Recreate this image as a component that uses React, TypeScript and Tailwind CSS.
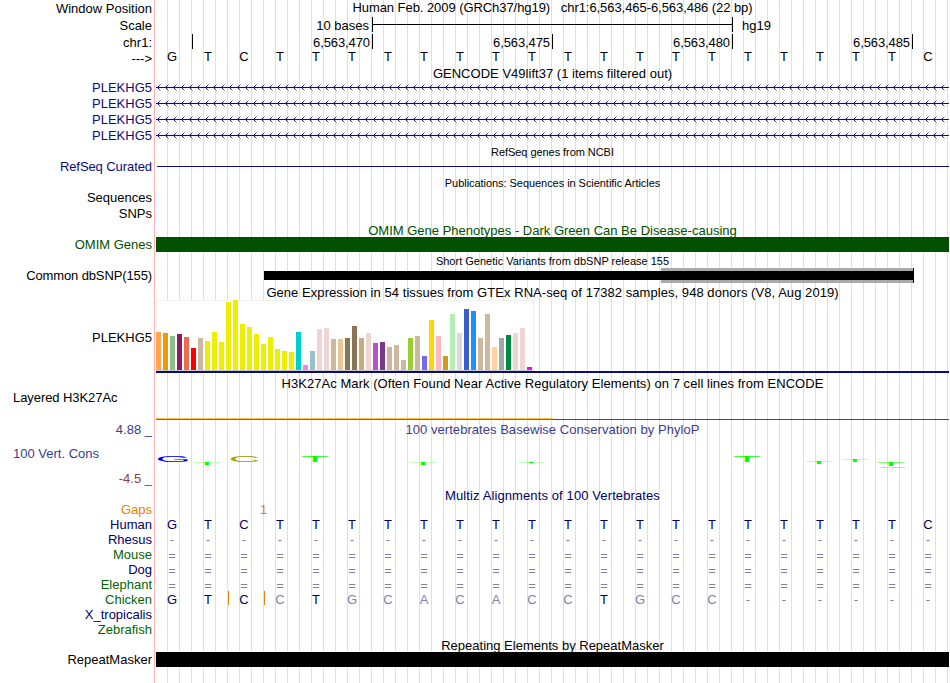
import type { ReactNode } from "react";

const navy = "text-[#0c0c78]";
const deepNavy = "text-[#000064]";
const green = "text-[#005000]";
const species = "text-[#006400]";

// Left side labels, top to bottom. h is the row height class
const labels = [
  { text: "Window Position", h: "h-[17px]", color: "text-black" },
  { text: "Scale", h: "h-[17px]", color: "text-black" },
  { text: "chr1:", h: "h-[17px]", color: "text-black" },
  { text: "--->", h: "h-[15px]", color: "text-black" },
  { text: "", h: "h-[13px]", color: "" },
  { text: "PLEKHG5", h: "h-4", color: navy },
  { text: "PLEKHG5", h: "h-4", color: navy },
  { text: "PLEKHG5", h: "h-4", color: navy },
  { text: "PLEKHG5", h: "h-4", color: navy },
  { text: "", h: "h-[15px]", color: "" },
  { text: "RefSeq Curated", h: "h-4", color: `${navy} tracking-[-0.08px]` },
  { text: "", h: "h-[15px]", color: "" },
  { text: "Sequences", h: "h-4", color: "text-black" },
  { text: "SNPs", h: "h-4", color: "text-black" },
  { text: "", h: "h-[15px]", color: "" },
  { text: "OMIM Genes", h: "h-4", color: green },
  { text: "", h: "h-[15px]", color: "" },
  { text: "Common dbSNP(155)", h: "h-4", color: "text-black tracking-[-0.12px]" },
  { text: "", h: "h-[46px]", color: "" },
  { text: "PLEKHG5", h: "h-4", color: "text-black" },
  { text: "", h: "h-11", color: "" },
  { text: "Layered H3K27Ac", h: "h-4", color: "text-black tracking-[-0.07px]", left: true },
  { text: "", h: "h-4", color: "" },
  { text: "4.88 _", h: "h-4", color: "text-[#3c3c8c]" },
  { text: "", h: "h-2", color: "" },
  { text: "100 Vert. Cons", h: "h-4", color: "text-[#3c3c8c]", left: true },
  { text: "", h: "h-[9px]", color: "" },
  { text: "-4.5 _", h: "h-4", color: "text-[#8c3c3c]" },
  { text: "", h: "h-4", color: "" },
  { text: "Gaps", h: "h-[15px]", color: "text-[#e68200]" },
  { text: "Human", h: "h-[15px]", color: deepNavy },
  { text: "Rhesus", h: "h-[15px]", color: deepNavy },
  { text: "Mouse", h: "h-[15px]", color: species },
  { text: "Dog", h: "h-[15px]", color: deepNavy },
  { text: "Elephant", h: "h-[15px]", color: species },
  { text: "Chicken", h: "h-[15px]", color: species },
  { text: "X_tropicalis", h: "h-[15px]", color: deepNavy },
  { text: "Zebrafish", h: "h-[15px]", color: species },
  { text: "", h: "h-[15px]", color: "" },
  { text: "RepeatMasker", h: "h-[15px]", color: "text-black" },
];

// GTEx bars: [height, color]
const expression: [number, string][] = [
  [38, "#ffa54f"], [37, "#ee9a00"], [34, "#8fbc8f"], [36, "#8b1c62"], [33, "#ee6a50"],
  [22, "#ff0000"], [32, "#cdb79e"], [29, "#eeee00"], [38, "#eeee00"], [28, "#eeee00"],
  [68, "#eeee00"], [70, "#eeee00"], [46, "#eeee00"], [43, "#eeee00"], [36, "#eeee00"],
  [26, "#eeee00"], [33, "#eeee00"], [21, "#eeee00"], [19, "#eeee00"], [18, "#eeee00"],
  [38, "#00cdcd"], [5, "#ee82ee"], [19, "#9ac0cd"], [41, "#eed5d2"], [42, "#eed5d2"],
  [31, "#cdb79e"], [31, "#eec591"], [32, "#8b7355"], [44, "#8b7355"], [32, "#cdaa7d"],
  [37, "#eed5d2"], [27, "#b452cd"], [28, "#7a378b"], [23, "#cdb79e"], [25, "#cdb79e"],
  [10, "#cdb79e"], [32, "#9acd32"], [34, "#cdb79e"], [14, "#7a67ee"], [50, "#ffd700"],
  [34, "#ffb6c1"], [14, "#cd9b1d"], [56, "#b4eeb4"], [37, "#d9d9d9"], [61, "#3a5fcd"],
  [59, "#1e90ff"], [32, "#cdb79e"], [56, "#cdb79e"], [23, "#ffd39b"], [32, "#a6a6a6"],
  [35, "#008b45"], [37, "#eed5d2"], [42, "#eed5d2"], [3, "#ff00ff"],
];

// Ink box of each base letter in font units (1/1000 em)
const ink = {
  G: { left: 50, width: 665, cap: 710 },
  C: { left: 50, width: 640, cap: 710 },
  T: { left: 21, width: 569, cap: 688 },
};

const conservation: { base: "G" | "C" | "T"; x: number; y: number; w: number; h: number; fill: string }[] = [
  { base: "G", x: 2, y: 18, w: 30, h: 6, fill: "#0000ff" },
  { base: "T", x: 38, y: 24, w: 26, h: 3, fill: "#00ff00" },
  { base: "C", x: 75, y: 18, w: 28, h: 6, fill: "#a0a000" },
  { base: "T", x: 146, y: 18, w: 26, h: 6, fill: "#00ff00" },
  { base: "T", x: 254, y: 24, w: 26, h: 3, fill: "#00ff00" },
  { base: "T", x: 362, y: 24, w: 26, h: 1, fill: "#00ff00" },
  { base: "T", x: 578, y: 18, w: 26, h: 6, fill: "#00ff00" },
  { base: "T", x: 650, y: 24, w: 26, h: 2, fill: "#00ff00" },
  { base: "T", x: 686, y: 21, w: 26, h: 3, fill: "#00ff00" },
  { base: "T", x: 722, y: 24, w: 26, h: 4, fill: "#00ff00" },
  { base: "C", x: 724, y: 28, w: 27, h: 1.6, fill: "#b4b450" },
];

function Title({ children, className }: { children: ReactNode; className: string }) {
  return (
    <div className={`flex shrink-0 justify-center items-center whitespace-pre ${className}`}>
      <span>{children}</span>
    </div>
  );
}

function Bases({ seq, className, faded = [] }: { seq: string; className: string; faded?: number[] }) {
  return (
    <div className={`flex items-center -ml-[2px] ${className}`}>
      {seq.split("").map((base, i) => (
        <span key={i} className={`w-9 shrink-0 text-center ${faded.includes(i) ? "text-[#8080b4]" : ""}`}>
          {base}
        </span>
      ))}
    </div>
  );
}

function Intron() {
  return (
    <svg className="w-[793px] h-4 block shrink-0" shapeRendering="crispEdges">
      <rect x="0" y="7" width="793" height="1" fill="#0c0c78" />
      {Array.from({ length: 99 }, (_, i) => (
        <g key={i} fill="#0c0c78">
          <rect x={i * 8 + 2} y="6" width="1" height="3" />
          <rect x={i * 8 + 3} y="5" width="1" height="1" opacity="0.8" />
          <rect x={i * 8 + 3} y="9" width="1" height="1" opacity="0.8" />
          <rect x={i * 8 + 4} y="4" width="1" height="1" opacity="0.3" />
          <rect x={i * 8 + 4} y="10" width="1" height="1" opacity="0.3" />
        </g>
      ))}
    </svg>
  );
}

function Tick({ label, width }: { label: string; width: string }) {
  return (
    <div className={`${width} h-[15px] shrink-0 flex justify-end items-center border-r border-black pr-[2px]`}>
      <span className="pt-[2px] tracking-[-0.1px]">{label}</span>
    </div>
  );
}

function Labels() {
  return (
    <div className="w-[154px] shrink-0 flex flex-col pr-[2px]">
      {labels.map((row, i) => (
        <div
          key={i}
          className={`${row.h} ${row.color} shrink-0 flex items-center whitespace-pre ${
            row.left ? "pl-[13px]" : "justify-end"
          }`}
        >
          {row.text}
        </div>
      ))}
    </div>
  );
}

function Tracks() {
  return (
    <div className="w-[793px] ml-px shrink-0 flex flex-col overflow-hidden bg-[repeating-linear-gradient(to_right,transparent_0_11px,#dcdcff_11px_12px)]">
      <Title className="h-4 pb-[2px] tracking-[-0.06px]">
        {"Human Feb. 2009 (GRCh37/hg19)   chr1:6,563,465-6,563,486 (22 bp)"}
      </Title>
      <div className="h-[18px] flex items-center">
        <span className="w-[213px] text-right">10 bases</span>
        <div className="w-[361px] h-[15px] ml-[3px] -mt-px flex items-center border-x border-black">
          <div className="w-full h-px bg-black" />
        </div>
        <span className="ml-[9px]">hg19</span>
      </div>
      <div className="h-4 flex">
        <Tick label="" width="w-[37px]" />
        <Tick label="6,563,470" width="w-[180px]" />
        <Tick label="6,563,475" width="w-[180px]" />
        <Tick label="6,563,480" width="w-[180px]" />
        <Tick label="6,563,485" width="w-[180px]" />
      </div>
      <Bases seq="GTCTTTTTTTTTTTTTTTTTTC" className="h-[15px] pb-[2px] text-black" />
      <Title className="h-4 tracking-[0.02px]">GENCODE V49lift37 (1 items filtered out)</Title>
      <div className="h-[63px] flex flex-col -mt-px">
        <Intron />
        <Intron />
        <Intron />
        <Intron />
      </div>
      <Title className="h-4 mt-px text-[11px] tracking-[-0.06px]">RefSeq genes from NCBI</Title>
      <div className="h-4 pt-[6px] pl-px">
        <div className="h-px bg-[#0c0c78]" />
      </div>
      <Title className="h-[15px] text-[11px] tracking-[-0.05px]">Publications: Sequences in Scientific Articles</Title>
      <div className="h-8" />
      <Title className={`h-[14px] ${green}`}>OMIM Gene Phenotypes - Dark Green Can Be Disease-causing</Title>
      <div className="h-[15px] bg-[#005000]" />
      <Title className="h-4 pt-[2px] text-[11px]">Short Genetic Variants from dbSNP release 155</Title>
      <div className="h-[15px] flex items-center pl-[108px]">
        <div className="w-[397px] h-[9px] bg-black" />
        <div className="w-[253px] h-[15px] flex items-center bg-[#a9a9a9] border-r border-black">
          <div className="w-full h-[9px] bg-black" />
        </div>
      </div>
      <Title className="h-[17px] pt-[2px] tracking-[0.055px]">
        Gene Expression in 54 tissues from GTEx RNA-seq of 17382 samples, 948 donors (V8, Aug 2019)
      </Title>
      <div className="h-[73px] flex flex-col">
        <div className="w-[378px] h-[71px] flex items-end gap-[2px] bg-white border-r border-b border-b-[#c8c8c8] border-r-[#f0f0f0] shadow-[inset_0_1px_#f0f0f0,inset_1px_0_#f0f0f0]">
          {expression.map(([height, color], i) => (
            <div key={i} className="w-[5px] shrink-0" style={{ height, backgroundColor: color }} />
          ))}
        </div>
        <div className="h-[2px] bg-[#0c0c78]" />
      </div>
      <Title className="h-[21px] tracking-[0.05px]">
        H3K27Ac Mark (Often Found Near Active Regulatory Elements) on 7 cell lines from ENCODE
      </Title>
      <div className="h-[26px] flex flex-col justify-end">
        <div className="w-[397px] h-px shrink-0 bg-[#ffbe50]" />
        <div className="flex h-px shrink-0">
          <div className="w-[397px] bg-[#8c6446]" />
          <div className="grow bg-[#464678]" />
        </div>
      </div>
      <Title className="h-[18px] tracking-[0.04px] text-[#3c3c8c]">100 vertebrates Basewise Conservation by PhyloP</Title>
      <svg className="w-[793px] h-[50px] block shrink-0">
        {conservation.map(({ base, x, y, w, h, fill }, i) => {
          const box = ink[base];
          return (
            <text
              key={i}
              fontSize="1000"
              fill={fill}
              transform={`translate(${x} ${y + h}) scale(${w / box.width} ${h / box.cap}) translate(${-box.left} 0)`}
            >
              {base}
            </text>
          );
        })}
      </svg>
      <Title className={`h-[14px] tracking-[0.11px] ${deepNavy}`}>Multiz Alignments of 100 Vertebrates</Title>
      <div className="h-[15px] flex items-center pl-[104px] text-[#e68200]">1</div>
      <Bases seq="GTCTTTTTTTTTTTTTTTTTTC" className={`h-[15px] ${deepNavy}`} />
      <Bases seq="----------------------" className="h-[15px] text-[#8080b4]" />
      <Bases seq="======================" className="h-[15px] pt-[2px] text-[#8080b4]" />
      <Bases seq="======================" className="h-[15px] pt-[2px] text-[#8080b4]" />
      <Bases seq="======================" className="h-[15px] pt-[2px] text-[#8080b4]" />
      <div className="relative">
        <Bases
          seq="GTCCTGCACACCTGCC------"
          className={`h-[15px] ${deepNavy}`}
          faded={[3, 5, 6, 7, 8, 9, 10, 11, 13, 14, 15, 16, 17, 18, 19, 20, 21]}
        />
        {/* insertions in the chicken sequence */}
        <div className="absolute -top-px left-[72px] w-px h-[14px] bg-[#e68200]" />
        <div className="absolute -top-px left-[108px] w-px h-[14px] bg-[#e68200]" />
      </div>
      <div className="h-[30px]" />
      <Title className="h-[15px] pt-[2px]">Repeating Elements by RepeatMasker</Title>
      <div className="h-[15px] bg-black" />
    </div>
  );
}

function App() {
  return (
    <div className="w-[950px] h-[683px] flex overflow-hidden bg-white text-[13px] leading-none text-black font-['Liberation_Sans',Arial,sans-serif]">
      <Labels />
      <div className="flex border-l border-[#ffb4b4]">
        <Tracks />
      </div>
    </div>
  );
}
export default App;
